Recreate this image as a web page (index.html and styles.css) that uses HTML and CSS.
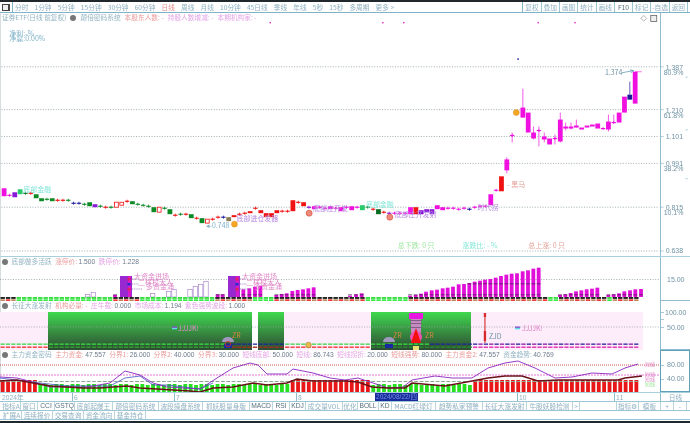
FILE: index.html
```html
<!DOCTYPE html>
<html lang="zh-CN">
<head>
  <meta charset="UTF-8" />
  <title>证券ETF 日线</title>
  <link rel="stylesheet" href="styles.css">
</head>
<body>
  <div class="screen">
    <div class="top-strip"></div>

    <div class="toolbar">
      <span class="win-btn"><i></i></span>
      <div class="periods">
        <span>分时</span><span>1分钟</span><span>5分钟</span><span>15分钟</span><span>30分钟</span><span>60分钟</span>
        <span class="on">日线</span><span>周线</span><span>月线</span><span>10分钟</span><span>45日线</span><span>季线</span>
        <span>年线</span><span>5秒</span><span>15秒</span><span>多周期</span><span>更多 &gt;</span>
      </div>
      <div class="tools">
        <span>复权</span><span>叠加</span><span>画图</span><span>统计</span><span>画线</span><span class="dark">F10</span><span>标记</span><span>-自选</span><span>返回</span>
      </div>
    </div>

    <section class="pane pane-main">
      <div class="pane-head">
        <span class="t-gray">证券ETF(日线 前复权)</span>
        <i class="dot"></i>
        <span class="t-gray">颠倍密码系统</span>
        <span class="t-red">本股东人数: -</span>
        <span class="t-pink">持股人数增减: -</span>
        <span class="t-pink">本期机构家: -</span>
      </div>
      <svg class="chart" id="mainChart" viewBox="0 13 690 244">
        <text class="lbl blue" x="8" y="36">净利:-%</text>
        <text class="lbl blue" x="8" y="41">净赢:0.00%</text>
        <text class="lbl cyan" x="22" y="193">底部金融</text>
        <text class="lbl purple" x="236" y="222">底部进仓发器</text>
        <text class="lbl blue" x="205" y="229">◂-0.748</text>
        <text class="lbl cyan" x="366" y="208">底部金融</text>
        <text class="lbl purple" x="313" y="212">底部庄开发</text>
        <text class="lbl purple" x="395" y="218">底部庄开发射</text>
        <text class="lbl purple" x="478" y="211">时代拐</text>
        <text class="lbl brown" x="508" y="188">- 黑马</text>
        <text class="lbl gray" x="606" y="75">1.374</text>
        <text class="lbl green" x="398" y="249">总下跌: 0 只</text>
        <text class="lbl cyan" x="463" y="249">涨跌比: - %</text>
        <text class="lbl brown" x="529" y="249">总上涨: 0 只</text>
        <text class="ax" x="667" y="70">1.387</text>
        <text class="ax" x="665" y="75">80.9%</text>
        <text class="ax" x="667" y="113">1.210</text>
        <text class="ax" x="665" y="118">61.8%</text>
        <text class="ax" x="667" y="140">1.101</text>
        <text class="ax" x="667" y="167">0.991</text>
        <text class="ax" x="665" y="172">38.2%</text>
        <text class="ax" x="667" y="211">0.815</text>
        <text class="ax" x="665" y="216">10.1%</text>
        <text class="ax" x="667" y="254">0.638</text>
      </svg>
      <div class="axis"></div>
    </section>

    <section class="pane pane-force">
      <div class="pane-head">
        <i class="dot"></i>
        <span class="t-gray">底部做多活跃</span>
        <span class="t-red">涨停价: <b>1.500</b></span>
        <span class="t-pink">跌停价: <b>1.228</b></span>
      </div>
      <svg class="chart" id="forceChart" viewBox="0 257 690 44">
        <text class="lbl pinkish" x="134" y="279">大资金进场</text>
        <text class="lbl pinkish" x="138" y="285">二样杖大人</text>
        <text class="lbl pinkish" x="146" y="289">多资金涌</text>
        <text class="lbl pinkish" x="242" y="279">大资金进场</text>
        <text class="lbl pinkish" x="246" y="285">二样杖大人</text>
        <text class="lbl pinkish" x="254" y="289">多资金涌</text>
        <text class="ax" x="667" y="282">15.00</text>
      </svg>
      <div class="axis"></div>
    </section>

    <section class="pane pane-launch">
      <div class="pane-head">
        <i class="dot"></i>
        <span class="t-gray">长征大涨发射</span>
        <span class="t-red">机构必量: -</span>
        <span class="t-pink">庄牛载: <b>0.000</b></span>
        <span class="t-pink">市场成本: <b>1.194</b></span>
        <span class="t-pink">紫色强势波段: <b>1.000</b></span>
      </div>
      <svg class="chart" id="launchChart" viewBox="0 301 690 49">
        <text class="lbl pinkish" x="178" y="331">JJJJK!</text>
        <text class="lbl pinkish" x="522" y="331">JJJJK!</text>
        <text class="lbl gray" x="489" y="339">ZJD</text>
        <text class="lbl orange" x="232" y="338">ZR</text>
        <text class="lbl orange" x="393" y="338">ZR</text>
        <text class="lbl orange" x="425" y="338">ZR</text>
        <text class="ax" x="665" y="315">100.00</text>
        <text class="ax" x="667" y="330">50.00</text>
      </svg>
      <div class="axis"></div>
    </section>

    <section class="pane pane-fund">
      <div class="pane-head">
        <i class="dot"></i>
        <span class="t-gray">主力资金密码</span>
        <span class="t-red">主力资金: <b>47.557</b></span>
        <span class="t-red">分界1: <b>26.000</b></span>
        <span class="t-red">分界2: <b>40.000</b></span>
        <span class="t-red">分界3: <b>30.000</b></span>
        <span class="t-pink">短线底部: <b>50.000</b></span>
        <span class="t-pink">短线: <b>86.743</b></span>
        <span class="t-pink">短线拐折: <b>20.000</b></span>
        <span class="t-red">短线强势: <b>80.000</b></span>
        <span class="t-red">主力资金2: <b>47.557</b></span>
        <span class="t-gray">资金趋势: <b>40.769</b></span>
      </div>
      <svg class="chart" id="fundChart" viewBox="0 350 690 42">
        <text class="lbl tiny pinkish" x="645" y="366">短线</text>
        <text class="lbl tiny pinkish" x="645" y="376">短线</text>
        <text class="lbl tiny pinkish" x="645" y="381">短线</text>
        <text class="lbl tiny green" x="645" y="386">短线</text>
        <text class="ax" x="667" y="367">80.00</text>
        <text class="ax" x="667" y="381">40.00</text>
      </svg>
      <div class="axis axis-active"></div>
    </section>

    <div class="date-row">
      <div class="dates">
        <span class="d-year">2024年</span>
        <span class="d-tick d-6">6</span>
        <span class="d-tick d-7">7</span>
        <span class="d-tick d-8">8</span>
        <span class="d-cursor">2024/08/22/四</span>
        <span class="d-tick d-10">10</span>
        <span class="d-tick d-11">11</span>
      </div>
      <div class="d-unit">日线</div>
    </div>

    <div class="tabs">
      <span class="w19">指标A</span><span class="w17">窗口</span><span class="w17 dark">CCI</span><span class="w20 dark">GSTQ</span>
      <span class="w38">底部起爆王</span><span class="w46">颠倍密码系统</span><span class="w44">波段操盘系统</span><span class="w47">抓妖股量身版</span>
      <span class="w23 dark">MACD</span><span class="w17 dark">RSI</span><span class="w16 dark">KDJ</span><span class="w37">成交量VOL</span>
      <span class="w15">优化</span><span class="w21 dark">BOLL</span><span class="w13 dark">KD</span><span class="w44">MACD红绿灯</span>
      <span class="w47">趋势私家预警</span><span class="w44">长征大涨发射</span><span class="w46">牛股妖股检测</span><span class="w7">&gt;</span>
      <div class="tabs-right">
        <span class="w22">指标⚙</span><span class="w22">模板</span><span class="w13">+</span><span class="w13">-</span>
      </div>
    </div>
    <div class="tabs tabs-second">
      <span class="w20">扩展A</span><span class="w31">连续报价</span><span class="w31">交易查询</span><span class="w31">资金流向</span><span class="w31">基金持仓</span>
    </div>
    <div class="bottom-strip"></div>
  </div>
  <script src="chart.js"></script>
</body>
</html>
```

FILE: styles.css
```css
* {
  box-sizing: border-box;
}
html, body {
  margin: 0;
  padding: 0;
  background: #fff;
  overflow: hidden;
}
.screen {
  width: 690px;
  height: 423px;
  font-family: "Noto Sans CJK SC", "Liberation Sans", sans-serif;
  font-size: 6.7px;
  color: #8fb0c0;
  display: flex;
  flex-direction: column;
  overflow: hidden;
  filter: blur(0.3px);
}
.top-strip {
  height: 2px;
  background: #20282e;
  flex: none;
}
.bottom-strip {
  flex: 1;
  margin-top: 1px;
  background: #20282e;
}

/* top toolbar */
.toolbar {
  height: 11px;
  flex: none;
  display: flex;
  align-items: stretch;
  border-bottom: 1px solid #7fb3c8;
  line-height: 10px;
  white-space: nowrap;
}
.win-btn {
  width: 13px;
  flex: none;
  border-right: 1px solid #7fb3c8;
  display: flex;
  align-items: center;
  justify-content: center;
}
.win-btn i {
  width: 8px;
  height: 7px;
  border: 1px solid #444;
  border-right-width: 2px;
  background: #eee;
}
.periods {
  display: flex;
  gap: 6.1px;
  padding-left: 2px;
}
.periods .on {
  color: #e88a8a;
}
.tools {
  margin-left: auto;
  display: flex;
  padding-right: 2px;
  border-left: 1px solid #7fb3c8;
}
.tools span {
  width: 18.3px;
  text-align: center;
  border-right: 1px solid #9cc6d6;
}
.tools .dark {
  color: #55707e;
}

/* chart panes */
.pane {
  position: relative;
  flex: none;
  display: flex;
  justify-content: flex-end;
  border-left: 1px solid #d8dde0;
}
.pane-main { height: 244px; border-bottom: 1px solid #a8cfdc; }
.pane-force { height: 44px; }
.pane-launch { height: 49px; }
.pane-fund { height: 42px; }
.pane-head {
  position: relative;
  z-index: 2;
  flex: 1;
  display: flex;
  align-items: center;
  gap: 3.5px;
  height: 9px;
  margin-left: 1px;
  white-space: nowrap;
  line-height: 9px;
}
.pane-main .pane-head { gap: 4px; }
.pane-head b {
  font-family: "Liberation Sans", sans-serif;
  font-weight: normal;
  color: #6c7a8c;
}
.t-gray { color: #93b4c2; }
.t-red { color: #eb9a9a; }
.t-pink { color: #e3a3e6; }
.dot {
  width: 6px;
  height: 6px;
  border-radius: 50%;
  background: #777;
  flex: none;
}
.chart {
  position: absolute;
  left: -1px;
  top: 0;
  width: 690px;
  height: 100%;
}
.axis {
  position: relative;
  width: 30px;
  flex: none;
  border-left: 1px solid #8fbccd;
}
.pane-force .axis,
.pane-launch .axis {
  border-bottom: 1px solid #8fbccd;
}
.axis-active {
  border: 1px solid #5f9fb8;
}
.lbl {
  font-size: 7px;
}
.tiny {
  font-size: 5px;
}
.ax {
  font-family: "Liberation Sans", sans-serif;
  font-size: 7px;
  fill: #6f93a3;
}
.blue { fill: #7fb2c8; }
.cyan { fill: #7fe6d8; }
.purple { fill: #b58ae0; }
.brown { fill: #e3a29a; }
.gray { fill: #6f93a3; }
.green { fill: #9fe6a0; }
.pinkish { fill: #e08ac8; }
.orange { fill: #d8843a; }

/* date row and tabs */
.date-row {
  height: 9px;
  flex: none;
  display: flex;
  border-top: 1px solid #a8cfdc;
  line-height: 8px;
}
.dates {
  position: relative;
  flex: 1;
  color: #8fb0c0;
}
.d-year {
  margin-left: 2px;
  font-family: "Liberation Sans", "Noto Sans CJK SC", sans-serif;
}
.d-tick {
  position: absolute;
  top: 0;
  border-left: 1px solid #8fbccd;
  padding-left: 1px;
  height: 8px;
}
.d-6 { left: 72px; }
.d-7 { left: 174px; }
.d-8 { left: 296px; }
.d-10 { left: 517px; }
.d-11 { left: 614px; }
.d-cursor {
  position: absolute;
  left: 375px;
  top: 0;
  width: 43px;
  height: 8px;
  background: #1a2a9c;
  color: #6f8fe0;
  text-align: center;
  font-family: "Liberation Sans", "Noto Sans CJK SC", sans-serif;
  font-size: 6.5px;
}
.d-unit {
  width: 30px;
  flex: none;
  text-align: center;
  border-left: 1px solid #8fbccd;
}
.tabs {
  height: 9px;
  flex: none;
  display: flex;
  border-top: 1px solid #9cc6d6;
  line-height: 8px;
  white-space: nowrap;
  padding-left: 2px;
}
.tabs span {
  flex: none;
  text-align: center;
  border-right: 1px solid #b8d6e0;
  overflow: hidden;
}
.tabs .dark {
  color: #55707e;
  font-family: "Liberation Sans", sans-serif;
}
.tabs-right {
  margin-left: auto;
  display: flex;
  padding-right: 3px;
  border-left: 1px solid #b8d6e0;
}
.tabs-second {
  height: 10px;
  border-bottom: 1px solid #9cc6d6;
}
.w7 { width: 7px; }
.w13 { width: 13px; }
.w15 { width: 15px; }
.w16 { width: 16px; }
.w17 { width: 17px; }
.w19 { width: 19px; }
.w20 { width: 20px; }
.w21 { width: 21px; }
.w22 { width: 22px; }
.w23 { width: 23px; }
.w31 { width: 31px; }
.w37 { width: 37px; }
.w38 { width: 38px; }
.w44 { width: 44px; }
.w46 { width: 46px; }
.w47 { width: 47px; }
```

FILE: chart.js
```js
const NS = 'http://www.w3.org/2000/svg';
const M = '#f010e0', R = '#f01212', G = '#0c8a24', P = '#8a18d8', N = '#1a1a9a', H = 'hollow', DG = '#0a6a20';

function shape(layer, tag, attrs) {
  const el = document.createElementNS(NS, tag);
  for (const k in attrs) el.setAttribute(k, attrs[k]);
  layer.appendChild(el);
  return el;
}

// the drawing goes under the labels already in the svg
function layerOf(id) {
  const svg = document.getElementById(id);
  const g = document.createElementNS(NS, 'g');
  svg.insertBefore(g, svg.firstChild);
  return g;
}

function rect(l, x, y, w, h, fill) {
  return shape(l, 'rect', { x, y, width: w, height: h, fill });
}

function dots(l, y, stroke, dash) {
  shape(l, 'line', { x1: 0, y1: y, x2: 660, y2: y, stroke, 'stroke-dasharray': dash || '1 1.6', 'stroke-width': 0.8 });
}

function poly(l, pts, stroke, width) {
  shape(l, 'polyline', { points: pts.map(p => p.join(',')).join(' '), fill: 'none', stroke, 'stroke-width': width });
}

// [top, bottom, colour, wick top, wick bottom]; a single y is a thin cross
const candles = [
  [189,197,M],[196,196,M],[193,198,P],[190,195,'#27c96a'],[194,194,DG],[194,194,R],[195,199,G],[199,202,G],[200,200,G],[199,202,G],
  [201,201,R],[201,201,R],[201,201,G],[204,204,N],[204,204,N],[205,205,G],[203,207,G],[205,208,P],[207,207,G],[208,208,R],
  [208,208,G],[203,208,H],[203,206,H],[202,202,R],[202,205,G],[205,205,G],[206,206,G],[207,207,G],[208,213,G],[208,213,H],
  [209,209,G],[210,215,G],[216,216,R],[215,215,G],[215,215,R],[215,219,G],[219,219,R],[219,224,G],[220,224,H],[220,220,R],
  [218,218,R],[218,218,N],[218,222,'#8a7a50'],[216,218,R],[215,215,R],[214,214,R],[212,214,R],[209,209,R],[211,214,R],[214,218,R],
  [214,218,R],[211,214,R],[212,212,R],[212,212,R],[201,212,R],[203,203,R],[203,207,R],[208,208,P],[207,210,M],[208,208,M],
  [209,209,M],[207,210,M],[209,209,M],[208,212,M],[208,208,M],[207,211,M],[208,208,M],[206,211,'#27c96a'],[208,208,G],[210,210,R],
  [210,215,DG],[213,213,R],[214,214,P],[214,214,M],[214,214,M],[214,214,M],[208,215,M],[208,215,R],[211,215,P],[210,213,P],
  [210,215,P],[206,210,M],[208,211,M],[209,209,M],[209,209,M],[210,210,M],[209,209,M],[210,210,N],[208,208,M],[207,207,M],
  [207,207,M],[195,206,M],[191,191,M],[177,192,R],[160,171,M,158,174],[136,136,M,133,143],null,[108,118,M,89,118],[113,133,M],[133,139,M,127,140],
  [131,131,M,127,147],[137,140,M,133,143],[139,145,M],[139,139,M,135,145],[120,142,M,113,143],[127,129,M,123,131],[127,129,M,123,130],[126,128,M,120,128],[128,130,M],[126,128,M],
  [125,127,M],[124,129,M],[129,129,M],[122,130,M,115,132],[123,123,M,115,123],[113,123,M],[97,113,M],[95,100,N,82,95],[72,104,M]
];
const candleX = i => 2.7 + 5.37 * i;

function drawMain() {
  const l = layerOf('mainChart');
  [67, 110, 137, 164, 208, 252].forEach(y => dots(l, y, '#8a9aa0'));
  candles.forEach((c, i) => {
    if (!c) return;
    const x = candleX(i), col = c[2] === H ? R : c[2];
    if (c[3]) shape(l, 'line', { x1: x, x2: x, y1: c[3], y2: c[4], stroke: col, 'stroke-width': 0.7 });
    if (c[0] === c[1]) {
      rect(l, x - 2.2, c[0] - 0.5, 4.4, 1.1, col);
      rect(l, x - 0.4, c[0] - 1.5, 0.8, 3, col);
    } else if (c[2] === H) {
      shape(l, 'rect', { x: x - 1.9, y: c[0], width: 3.8, height: c[1] - c[0], fill: '#fff', stroke: R, 'stroke-width': 0.8 });
    } else {
      rect(l, x - 2.4, c[0], 4.8, c[1] - c[0], col);
    }
  });
  // markers and signals
  [[234, 225], [517, 113]].forEach(p => shape(l, 'circle', { cx: p[0], cy: p[1], r: 3, fill: '#f5a623', stroke: '#d89030', 'stroke-width': 0.5 }));
  [[309, 214], [390, 218]].forEach(p => shape(l, 'circle', { cx: p[0], cy: p[1], r: 3, fill: '#ee8a7a', stroke: '#d85040', 'stroke-width': 0.7 }));
  [270, 383, 404, 539, 576].forEach(x => rect(l, x - 0.7, 22, 1.4, 1.4, '#e020c0'));
  rect(l, 518, 58.5, 1.6, 1.6, '#3030c0');
  shape(l, 'path', { d: 'M623 73 L634 71 M631 70 L635 71 L632 73', fill: 'none', stroke: '#4f8fa8', 'stroke-width': 0.7 });
  shape(l, 'line', { x1: 636, x2: 643, y1: 72, y2: 72, stroke: M, 'stroke-width': 0.6 });
  // top right icons
  shape(l, 'path', { d: 'M645 15.5 L648 18.5 L645 21 L642 18.5 Z', fill: 'none', stroke: '#999', 'stroke-width': 0.7 });
  shape(l, 'rect', { x: 652, y: 15.5, width: 6, height: 6, fill: '#eee', stroke: '#666', 'stroke-width': 0.8 });
  // axis ticks
  [67, 110, 137, 164, 208, 252].forEach(y => shape(l, 'line', { x1: 661, x2: 665, y1: y, y2: y, stroke: '#8fbccd', 'stroke-width': 0.7 }));
  [[687, 77], [687, 130], [687, 179]].forEach(p => rect(l, p[0], p[1], 2, 0.8, '#8fbccd'));
}

// x in the 3x crops, top of the bar in the same crops
const magentaLeft = [[345,120],[653,118],[668,118],[730,103],[748,100],[765,95],[781,92],[829,120],[845,117],[860,115],[877,108],[893,105],[909,103],[925,100],[941,97]];
const magentaRight = [[15,122],[33,118],[50,115],[195,122],[212,120],[228,116],[243,110],[260,106],[276,104],[293,100],[308,98],[324,95],[341,88],[357,87],[373,84],[389,80],[405,77],[420,74],[436,72],[452,68],[468,63],[484,59],[500,56],[516,55],[533,49],[549,46],[565,41],[581,38],[645,120],[661,118],[677,114],[693,109],[709,106],[725,103],[741,101],[757,98],[790,120],[806,118],[822,115],[838,109],[855,106],[871,103],[888,102]];
const hollowLeft = [[263,118],[280,113],[458,115],[506,110],[522,103],[570,103],[586,95],[602,88],[618,80]];
const forceGreen = [[12,113],[137,213],[248,272],[365,408],[543,558],[602,608]];

function drawForce() {
  const l = layerOf('forceChart');
  dots(l, 279.5, '#8a9aa0');
  const top = 255, base = 297;
  const bar = (x, b) => {
    rect(l, x - 1.9, top + b / 3, 3.8, base - top - b / 3, '#e010d8');
    if (b < 85) rect(l, x - 1.9, 283.5, 3.8, 0.7, '#3a1a4a');
    rect(l, x - 1.9, 294.5, 3.8, 0.7, '#3a1a4a');
  };
  magentaLeft.forEach(b => bar(b[0] / 3, b[1]));
  magentaRight.forEach(b => bar(345 + b[0] / 3, b[1]));
  hollowLeft.forEach(b => shape(l, 'rect', { x: b[0] / 3 - 2.2, y: top + b[1] / 3, width: 4.4, height: base - top - b[1] / 3, fill: '#fff', stroke: '#a078c8', 'stroke-width': 0.6 }));
  [120, 228].forEach(x => {
    rect(l, x, 276, 12, 21, '#9a28d0');
    rect(l, x + 8, 276, 3, 21, '#d818c8');
    [278, 283, 288].forEach((y, i) => rect(l, x + 7.5, y, 3, 2.5, i === 1 ? '#2030d0' : '#e02060'));
    shape(l, 'path', { d: `M${x + 12} 279 h6 M${x + 12} 284 h7 M${x + 12} 289 h10`, stroke: '#8a5ab0', 'stroke-dasharray': '1 .8', 'stroke-width': 0.7 });
  });
  for (let i = 0; i < 119; i++) {
    const x = candleX(i) - 2.2;
    const green = forceGreen.some(r => x >= r[0] && x <= r[1]);
    rect(l, x, 297, 4.4, 1.9, green ? '#36e040' : '#222');
    rect(l, x, 299.3, 4.4, 1.7, green ? '#3be84a' : i % 2 ? '#ef3a3a' : '#c08a60');
  }
}

function drawLaunch() {
  const l = layerOf('launchChart');
  const defs = shape(l, 'defs', {});
  const grad = shape(defs, 'linearGradient', { id: 'up', x1: 0, x2: 0, y1: 0, y2: 1 });
  shape(grad, 'stop', { offset: 0, 'stop-color': '#3fd84e' });
  shape(grad, 'stop', { offset: 1, 'stop-color': '#2f4a34' });
  [[0, 48], [284, 87], [471, 172]].forEach(s => rect(l, s[0], 312, s[1], 38, '#fdecf9'));
  [[48, 204], [258, 26], [371, 100]].forEach(s => rect(l, s[0], 312, s[1], 38, 'url(#up)'));
  dots(l, 327, '#9aa5aa');
  for (let i = 0; i < 119; i++) {
    const c = candleX(i), x = c - 2.2;
    let a = '#38d84a', b = '#f03a3a';
    if (c > 48 && c < 225) { a = '#36e040'; b = '#2fa030'; }
    else if (c >= 225 && c < 284) { a = '#1a2a9a'; b = '#a03020'; }
    else if (c >= 371 && c < 471) { a = c > 430 ? '#1a2a9a' : '#36e040'; b = '#2a8a30'; }
    else if (c >= 471) { a = i % 2 ? '#8a18a8' : '#2a20a0'; b = '#e030b0'; }
    rect(l, x, 343.5, 4.2, 1.3, a);
    rect(l, x, 346.5, 4.2, 1.4, b);
  }
  // tower on the big day
  rect(l, 409, 313, 14, 6, '#e818e0');
  rect(l, 411, 319, 10, 14, '#c68ac0');
  [320, 323, 327].forEach(y => rect(l, 410, y, 12, 0.9, '#7a5a80'));
  shape(l, 'circle', { cx: 416, cy: 337, r: 6, fill: '#f050b0' });
  shape(l, 'path', { d: 'M416 328 L421 343 L411 343 Z', fill: '#f51010' });
  rect(l, 413, 346, 6, 4, '#e8e070');
  // hats
  [[228, 339], [389, 339]].forEach(p => {
    shape(l, 'path', { d: `M${p[0] - 6} ${p[1] + 3} a6 5 0 0 1 12 0 Z`, fill: '#a098c0' });
    rect(l, p[0] - 4, p[1] + 5, 8, 4, '#1a2aa0');
  });
  shape(l, 'circle', { cx: 228, cy: 344, r: 2.6, fill: 'none', stroke: '#e03020', 'stroke-width': 0.8 });
  shape(l, 'circle', { cx: 308.5, cy: 345, r: 2.8, fill: '#e8b84a', stroke: '#9a8a3a', 'stroke-width': 0.6 });
  // vertical line
  rect(l, 484.4, 313, 1.1, 30, '#d82a2a');
  rect(l, 483.8, 313, 2.3, 4, '#d82a2a');
  rect(l, 483.8, 331, 2.3, 10, '#d82a2a');
  [[172, 326.5], [515, 326.5]].forEach(p => {
    rect(l, p[0], p[1], 5, 1.4, '#8050c8');
    rect(l, p[0], p[1] + 1.4, 5, 1.4, '#60d8e8');
  });
  [312, 319, 327].forEach(y => rect(l, 661, y, 3, 0.8, '#8fbccd'));
}

const mainLine = [[0,381],[17,380],[33,383],[50,386],[67,387],[83,388],[100,388],[113,387],[127,386],[140,388],[157,389],[173,390],[190,391],[200,392],[213,388],[233,387],[253,383],[267,385],[287,383],[297,379],[313,381],[345,381],[358,382],[372,387],[388,388],[405,388],[412,383],[445,386],[472,381],[488,378],[505,376],[522,376],[538,381],[558,380],[578,380],[618,380],[625,378],[642,376]];
const purpleLine = [[0,377],[17,378],[33,382],[50,387],[67,387],[87,387],[110,383],[125,371],[140,375],[153,383],[167,387],[200,389],[217,378],[233,368],[250,363],[258,365],[267,374],[287,374],[293,369],[313,373],[330,378],[345,380],[358,378],[370,382],[388,388],[403,387],[412,380],[435,376],[452,378],[472,378],[488,368],[505,363],[518,361],[535,368],[555,378],[572,377],[592,373],[612,374],[625,368],[638,364]];
const blueLine = [[0,378],[40,383],[67,386],[110,386],[125,378],[140,376],[153,385],[167,385],[200,389],[213,383]];

function drawFund() {
  const l = layerOf('fundChart');
  dots(l, 365, '#c03030', '1 1');
  dots(l, 375, '#e050d0', '2 1');
  for (let i = 0; i < 119; i++) {
    const c = candleX(i), x = c - 1.9;
    const red = c < 37 || (c > 290 && c < 371) || c > 471;
    if (red) rect(l, x, 380, 3.8, 12, '#e81616');
    else rect(l, x, 384 + (i % 3 === 0 ? 1 : 0), 3.8, 8, '#24e01e');
    rect(l, x, 381, 3.8, 1, '#8aa890');
  }
  poly(l, blueLine, '#4050c0', 0.8);
  poly(l, purpleLine, '#8a24c0', 0.9);
  poly(l, mainLine, '#6a1018', 1.6);
  [365, 379].forEach(y => rect(l, 661, y, 3, 0.8, '#8fbccd'));
}

drawMain();
drawForce();
drawLaunch();
drawFund();
```
